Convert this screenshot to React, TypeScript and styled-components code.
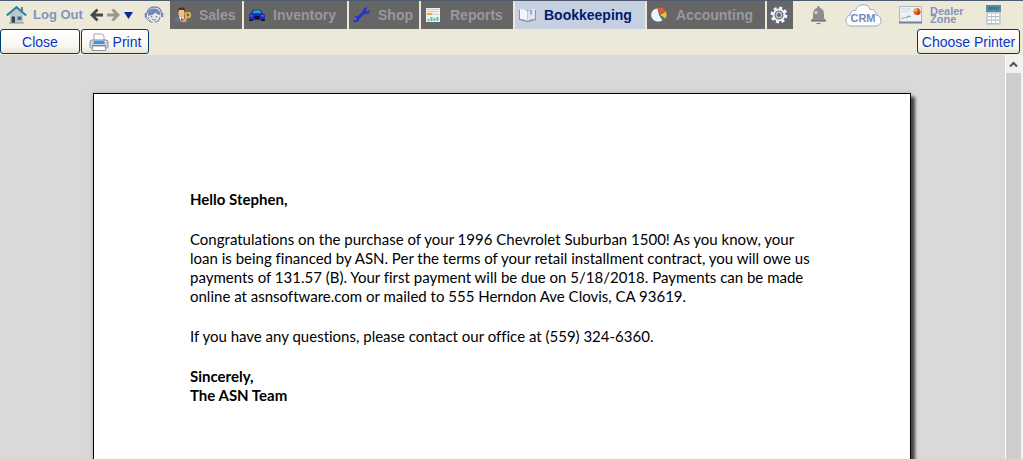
import React from 'react';
import styled, { createGlobalStyle, css } from 'styled-components';

const GlobalStyle = createGlobalStyle`
  *, *::before, *::after { box-sizing: border-box; }
  body { margin: 0; background: #d9d9d9; }
  button { font-family: inherit; padding: 0; margin: 0; cursor: pointer; }
  svg { display: block; flex: none; }
`;

const Shell = styled.div`
  display: flex;
  flex-direction: column;
  height: 100vh;
  font-family: 'Liberation Sans', Arial, sans-serif;
`;

const Header = styled.header`
  flex: none;
  background: #ece9d8;
  border-top: 1px solid #4f5b6e;
`;

const NavBar = styled.nav`
  display: flex;
  align-items: stretch;
  height: 28px;
`;

const Session = styled.div`
  display: flex;
  align-items: center;
  flex: none;
  width: 170px;
  padding-left: 6px;
`;

const PlainButton = styled.button<{ $ml?: number; $gap?: number }>`
  display: flex;
  align-items: center;
  flex: none;
  gap: ${({ $gap = 6 }) => $gap}px;
  margin-left: ${({ $ml = 0 }) => $ml}px;
  border: 0;
  background: none;
  color: #8393bd;
  font-size: 13px;
  font-weight: bold;
  line-height: 16px;
`;

const Tabs = styled.div`
  display: flex;
  flex: none;
  gap: 2px;
`;

const Tab = styled.button<{ $width: number; $active?: boolean }>`
  display: flex;
  align-items: center;
  gap: 7px;
  width: ${({ $width }) => $width}px;
  padding-left: 3px;
  border: 0;
  background: #666;
  color: #999;
  font-size: 14px;
  font-weight: bold;
  line-height: 16px;
  ${({ $active }) => $active && css`
    background: #c7d0e1;
    color: #001a70;
  `}
`;

const Tools = styled.div`
  display: flex;
  align-items: center;
  flex: none;
  padding-left: 17px;
`;

const TwoLine = styled.span`
  width: 34px;
  font-size: 11px;
  line-height: 8px;
  text-align: left;
`;

const ActionRow = styled.div`
  display: flex;
  gap: 1px;
  height: 26px;
  padding-right: 3px;
`;

const Action = styled.button<{ $width: number; $push?: boolean }>`
  display: flex;
  align-items: center;
  justify-content: center;
  gap: 4px;
  width: ${({ $width }) => $width}px;
  height: 25px;
  margin-left: ${({ $push }) => ($push ? 'auto' : '0')};
  border: 1px solid #003c74;
  border-radius: 3px;
  background: linear-gradient(#fff, #f8f7f1 70%, #e6e2d2);
  color: #0a34c8;
  font-size: 14px;
  line-height: 16px;
  white-space: nowrap;
`;

const Workspace = styled.main`
  display: flex;
  flex: 1;
  min-height: 0;
  background: #d9d9d9;
`;

const Preview = styled.div`
  flex: 1;
  min-width: 0;
  padding: 38px 94px 38px 93px;
  overflow-y: auto;
  scrollbar-width: none;
`;

const Sheet = styled.article`
  min-height: 1060px;
  padding: 96px;
  border: 1px solid #000;
  background: #fff;
  box-shadow: 4px 4px 3px #444, 0 0 4px 1px #bbb;
  color: #000;
  font-family: Lato, Calibri, sans-serif;
  font-size: 15px;
  font-variant-ligatures: none;
  line-height: 19px;
  white-space: nowrap;
`;

const Paragraph = styled.p<{ $bold?: boolean }>`
  margin: 0 0 21px;
  font-weight: ${({ $bold }) => ($bold ? 'bold' : 'normal')};
`;

const ScrollTrack = styled.div`
  display: flex;
  flex-direction: column;
  flex: none;
  width: 18px;
  padding: 1px 2px 0 0;
  background: #f3f3f3;
  border-left: 1px solid #fff;
`;

const ScrollButton = styled.button`
  display: flex;
  align-items: center;
  justify-content: center;
  height: 17px;
  border: 0;
  background: #f0f0f0;
`;

const ScrollThumb = styled.div`
  flex: 1;
  background: #cdcdcd;
`;

const HouseIcon = () => (
  <svg width="21" height="18" viewBox="0 0 21 18">
    <path d="M4 8 10.500 2.500 17 8v9H4z" fill="#bfc5c9" />
    <path d="M15 1h2v5h-2z" fill="#697a85" />
    <path d="M.8 9.500 10.500 1.200 20.200 9.500" fill="none" stroke="#2787a8" strokeWidth="2.200" />
    <path d="M5.500 10.500H9V17H5.500z" fill="#39434e" />
    <path d="M11.500 10.500h4v3.500h-4z" fill="#247895" />
    <path d="M3 17h15" stroke="#87919a" />
  </svg>
);

const ArrowIcon = ({ color, flip }: { color: string; flip?: boolean }) => (
  <svg width="13" height="14" viewBox="0 0 13 14">
    <path
      d={flip ? 'M0 7h11M5.500 1.500 11 7l-5.500 5.500' : 'M13 7H2M7.500 1.500 2 7l5.500 5.500'}
      fill="none" stroke={color} strokeWidth="2.800"
    />
  </svg>
);

const CaretIcon = () => (
  <svg width="9" height="8" viewBox="0 0 9 8"><path d="M0 1h9L4.500 8z" fill="#0a2a94" /></svg>
);

const AgentIcon = () => (
  <svg width="20" height="18" viewBox="0 0 20 18" fill="none" stroke="#7388bd">
    <path d="M3 7C4 2.500 7 1 10.500 1S17 3 17.500 7" strokeWidth="1.300" />
    <path d="M4 9.500C3 4 7 2.500 10 2.500S16.500 4.500 16.500 9C14 9 12.500 8 11.500 6.500 9.500 9 7 9.500 4 9.500z" fill="#7388bd" stroke="none" />
    <path d="M16 11c-.5 3.500-3 5-5.500 5" strokeWidth="1.200" />
    <path d="M4 11c.5 2.500 2 4 4 4.500" strokeDasharray="2 1" />
    <path d="M1.800 7v4.500M18.200 7v4" strokeWidth="2.200" />
    <path d="M2 11.500c1 2.500 3.500 4.500 6.500 5" />
    <path d="M7.500 10v1.500M12.500 10v1.500" strokeWidth="1.500" />
    <path d="M8 13.500q2 1 4 0" />
  </svg>
);

const SalesIcon = () => (
  <svg width="19" height="16" viewBox="0 0 19 16">
    <path d="M1 15c0-3 1.500-4 4.500-5h6c3 1 4.500 2 4.500 5z" fill="#50779a" />
    <path d="M6 9.500h5.500L9 15H8z" fill="#fff" />
    <path d="M8 10.500h1.500l.5 3.500-1 1-1.500-1z" fill="#d44" />
    <path d="M5.500 3h6v4c0 4-6 4-6 0z" fill="#f5bd8b" />
    <path d="M5 5.500V2c2-2 6-2 7 0v3.500l-1-2.500H6z" fill="#553224" />
    <circle cx="15" cy="8" r="2.300" fill="none" stroke="#e5b638" strokeWidth="1.800" />
    <path d="m14 10-4 5m1-2 2 1.500" stroke="#e5b638" strokeWidth="1.700" />
  </svg>
);

const CarIcon = () => (
  <svg width="19" height="14" viewBox="-1 -1 20 15">
    <path d="m2 6 3-5q4-1 8.500 0l3 5z" fill="#173578" />
    <path d="m4.500 5 2-3.500h6L14.500 5z" fill="#17a8ce" />
    <path d="M1 6q8-3 17 0v5H1z" fill="#1d26c0" />
    <path d="M1 11h4v2H1zM14 11h4v2h-4z" fill="#111" />
    <path d="M7 7.500h5v3.500H7z" fill="#10102b" />
    <path d="M2 7.500h3M14 7.500h3" stroke="#7890ee" />
    <path d="M5 11.500h9" stroke="#1a2393" />
  </svg>
);

const WrenchIcon = () => (
  <svg width="19" height="16" viewBox="0 0 19 16">
    <path d="m5 12 9-8.500" stroke="#2532d3" strokeWidth="3" />
    <path d="M16 .5 13.500 3l.5 1.500 1.500.2L18 2.500C18.500 6 16 7.500 13 6.500L11 4C11 1.500 13 0 16 .5zM1 13l2.500.5L5.500 12l-.8-2-3-.5C4 8 7 9 7.500 11.500c0 3-3 4.500-6 3.500z" fill="#2532d3" />
  </svg>
);

const ReportIcon = () => (
  <svg width="19" height="14" viewBox="0 0 19 14">
    <path d="M2 0h14v14H2z" fill="#f0f0ee" />
    <path d="M3 1.500h12M3 3.500h12M10 6.500h5" stroke="#ccd0d2" />
    <path d="M3 6h5.500" stroke="#f2a92e" strokeWidth="2" />
    <path d="M4.500 13v-2M7.500 13v-4M10.500 13v-3M13.500 13V9" stroke="#5bbfac" strokeWidth="2" />
  </svg>
);

const BookIcon = () => (
  <svg width="19" height="15" viewBox="0 0 19 15">
    <path d="M1 2v10l7.500 2h2l7.500-2V2z" fill="#8992a0" />
    <path d="M2 1q4 0 7.500 2v10Q6 11 2 11z" fill="#f3f5f7" />
    <path d="M17 1q-4 0-7.500 2v10Q13 11 17 11z" fill="#e1e6ec" />
    <path d="M12 2h2v5l-1-1-1 1z" fill="#73bbd8" />
    <path d="M9.500 3v10" stroke="#c3c9d0" />
  </svg>
);

const PieIcon = () => (
  <svg width="19" height="16" viewBox="0 0 19 16">
    <path d="M9 8 7.500 1.500C-1 2-1 14.500 8.500 14.500q2.500 0 4-1z" fill="#eef5f8" />
    <path d="M9.500 7 8 .7Q13 0 15.500 4z" fill="#e95539" />
    <path d="M10 8 16 4.500q1.200 4 0 7z" fill="#f4c51e" />
    <path d="m10 9 5.500 3q-1 2-3 2z" fill="#477da0" />
  </svg>
);

const GearIcon = () => (
  <svg width="18" height="18" viewBox="0 0 18 18">
    <circle cx="9" cy="9" r="7.400" fill="none" stroke="#6d92d6" strokeWidth="2.600" strokeDasharray="3.300 2.511" />
    <circle cx="9" cy="9" r="7.200" fill="none" stroke="#f5f7fb" strokeWidth="2.200" strokeDasharray="2.900 2.755" />
    <circle cx="9" cy="9" r="5.500" fill="#666" stroke="#f3f5f9" strokeWidth="2" />
    <circle cx="9" cy="9" r="2.700" fill="#666" stroke="#b9c6de" strokeWidth="1.400" />
  </svg>
);

const BellIcon = () => (
  <svg width="17" height="19" viewBox="0 0 17 19">
    <path d="M7 2q0-2 1.500-2T10 2q4 1 4 6v4l2 2.500v1H1v-1L3 12V8q0-5 4-6z" fill="#8c8c8c" />
    <path d="M1 14.800h15" stroke="#6c6c6c" />
    <path d="M6 17h5q-2.500 2.500-5 0z" fill="#777" />
    <circle cx="6" cy="6.500" r="1.700" fill="#ccc" />
  </svg>
);

const CloudIcon = () => (
  <svg width="37" height="23" viewBox="0 0 37 23">
    <path d="M7 22C3 22 1 19.500 1 16.500S3 11.500 5.500 11C5 8 8 6 10.500 6.500 11.500 3 14 .8 18 .8c4 0 6 1.700 7 4.700 4-.5 6.500 2 6 5.500 3 .3 5 2.300 5 5.500S33.500 22 30 22z" fill="#fff" stroke="#92a6d2" />
    <text x="18" y="18" textAnchor="middle" fontSize="11" fontWeight="bold" fill="#7388bd">CRM</text>
  </svg>
);

const BoardIcon = () => (
  <svg width="23" height="18" viewBox="0 0 23 18">
    <path d="M.5.5h22v16H.5z" fill="#eef2f6" stroke="#a8b6ce" />
    <path d="M0 16.500h23" stroke="#6f7f9f" strokeWidth="2" />
    <path d="M2 3h10M2 5.500h8" stroke="#cbd4df" />
    <path d="m2 13 3-1.500 2 .5 2.500-2.500" fill="none" stroke="#ea8b73" />
    <path d="m8 12 2-2 2 1" fill="none" stroke="#66b28a" />
    <circle cx="18" cy="5.500" r="3.500" fill="#e8612e" />
    <path d="M18 5.500V2a3.500 3.500 0 0 0-3.500 3.500z" fill="#f4b43c" />
    <path d="M18 5.500h3.500A3.500 3.500 0 0 1 18 9z" fill="#bc4426" />
  </svg>
);

const CalculatorIcon = () => (
  <svg width="16" height="20" viewBox="0 0 16 20">
    <path d="M0 0h15v20H0z" fill="#c8d0d3" />
    <path d="M0 0h15v7H0z" fill="#5d8da5" />
    <path d="M2 2h11v2.500H2z" fill="#357895" />
    <path d="M2 10h3m1 0h3m1 0h3M2 13.500h3m1 0h3m1 0h3M2 17h3m1 0h3m1 0h3" stroke="#fff" strokeWidth="2.400" />
    <path d="M2 11.500h11M2 15h11M2 18.500h11" stroke="#9cabb3" strokeWidth=".6" />
  </svg>
);

const PrinterIcon = () => (
  <svg width="20" height="18" viewBox="0 0 20 18">
    <path d="M5 8V1h8l2 2v5z" fill="#fff" stroke="#9aa4b5" />
    <path d="M1 9q0-2 2-2h14q2 0 2 2v5q0 1-1.500 1h-15Q1 15 1 14z" fill="#d3d7dd" stroke="#858d99" />
    <path d="M5 8h10l1 3H4z" fill="#329af0" />
    <path d="M4 13h12l1 4.500H3z" fill="#fff" stroke="#8d96a5" />
    <path d="M3 12.500h14" stroke="#7b8593" />
  </svg>
);

const ChevronUpIcon = () => (
  <svg width="9" height="7" viewBox="0 0 9 7">
    <path d="m1 5.500 3.500-3.500L8 5.500" fill="none" stroke="#505050" strokeWidth="2" />
  </svg>
);

const tabs = [
  { label: 'Sales', width: 72, icon: <SalesIcon /> },
  { label: 'Inventory', width: 103, icon: <CarIcon /> },
  { label: 'Shop', width: 70, icon: <WrenchIcon /> },
  { label: 'Reports', width: 92, icon: <ReportIcon /> },
  { label: 'Bookkeeping', width: 130, icon: <BookIcon />, active: true },
  { label: 'Accounting', width: 118, icon: <PieIcon /> },
];

export default function App() {
  return (
    <Shell>
      <GlobalStyle />
      <Header>
        <NavBar>
          <Session>
            <PlainButton><HouseIcon />Log Out</PlainButton>
            <PlainButton $ml={7} aria-label="Back"><ArrowIcon color="#484848" /></PlainButton>
            <PlainButton $ml={4} aria-label="Forward"><ArrowIcon color="#99978b" flip /></PlainButton>
            <PlainButton $ml={4} aria-label="History"><CaretIcon /></PlainButton>
            <PlainButton $ml={11} aria-label="Support"><AgentIcon /></PlainButton>
          </Session>
          <Tabs>
            {tabs.map(({ label, width, icon, active }) => (
              <Tab key={label} $width={width} $active={active}>{icon}{label}</Tab>
            ))}
            <Tab $width={26} aria-label="Settings"><GearIcon /></Tab>
          </Tabs>
          <Tools>
            <PlainButton aria-label="Notifications"><BellIcon /></PlainButton>
            <PlainButton $ml={18} aria-label="CRM"><CloudIcon /></PlainButton>
            <PlainButton $ml={17} $gap={8}><BoardIcon /><TwoLine>Dealer Zone</TwoLine></PlainButton>
            <PlainButton $ml={22} aria-label="Calculator"><CalculatorIcon /></PlainButton>
          </Tools>
        </NavBar>
        <ActionRow>
          <Action $width={80}>Close</Action>
          <Action $width={68}><PrinterIcon />Print</Action>
          <Action $width={103} $push>Choose Printer</Action>
        </ActionRow>
      </Header>
      <Workspace>
        <Preview>
          <Sheet>
            <Paragraph $bold>Hello Stephen,</Paragraph>
            <Paragraph>
              Congratulations on the purchase of your 1996 Chevrolet Suburban 1500! As you know, your<br />
              loan is being financed by ASN. Per the terms of your retail installment contract, you will owe us<br />
              payments of 131.57 (B). Your first payment will be due on 5/18/2018. Payments can be made<br />
              online at asnsoftware.com or mailed to 555 Herndon Ave Clovis, CA 93619.
            </Paragraph>
            <Paragraph>If you have any questions, please contact our office at (559) 324-6360.</Paragraph>
            <Paragraph $bold>Sincerely,<br />The ASN Team</Paragraph>
          </Sheet>
        </Preview>
        <ScrollTrack>
          <ScrollButton aria-label="Scroll up"><ChevronUpIcon /></ScrollButton>
          <ScrollThumb />
        </ScrollTrack>
      </Workspace>
    </Shell>
  );
}
